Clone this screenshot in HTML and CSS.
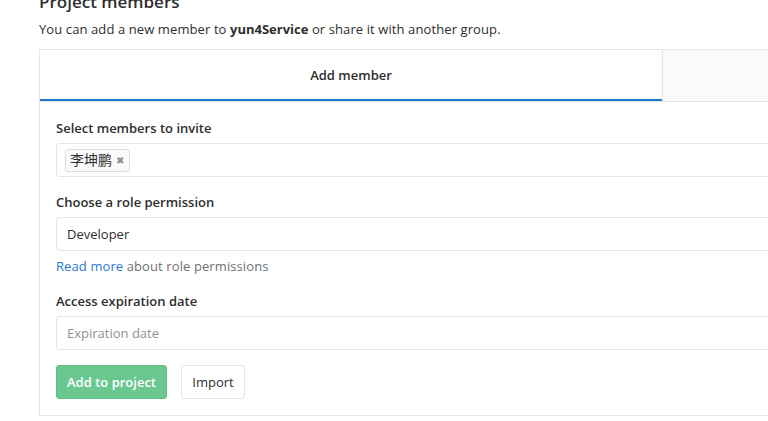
FILE: index.html
```html
<!DOCTYPE html>
<html>
<head>
<meta charset="utf-8">
<link rel="stylesheet" href="styles.css">
</head>
<body>
<div class="page">
  <h3 class="title">Project members</h3>
  <p class="lead">You can add a new member to <strong>yun4Service</strong> or share it with another group.</p>
  <div class="card">
    <div class="tabs">
      <div class="tab active">Add member</div>
      <div class="tab other"></div>
    </div>
    <form class="form">
      <div class="group">
        <label class="label">Select members to invite</label>
        <div class="input tokens">
          <span class="token">李坤鹏<span class="x">✖</span></span>
        </div>
      </div>
      <div class="group">
        <label class="label">Choose a role permission</label>
        <div class="input">Developer</div>
        <div class="help"><a class="link">Read more</a> about role permissions</div>
      </div>
      <div class="group">
        <label class="label">Access expiration date</label>
        <div class="input placeholder">Expiration date</div>
      </div>
      <div class="actions">
        <span class="btn btn-success">Add to project</span>
        <span class="btn btn-default">Import</span>
      </div>
    </form>
  </div>
</div>
</body>
</html>
```

FILE: styles.css
```css
html, body {
  margin: 0;
  padding: 0;
  overflow: hidden;
  background: #fff;
}
body {
  font-family: "Open Sans", "Noto Sans CJK SC", sans-serif;
  font-size: 13px;
  line-height: 20px;
  color: #2e2e2e;
}
.page {
  padding-left: 39px;
  width: 1300px;
}
.title {
  margin: -10px 0 0;
  font-size: 17px;
  line-height: 24px;
  font-weight: 600;
  color: #2e2e2e;
}
.lead {
  margin: 5px 0 10px;
  letter-spacing: 0.1px;
}
.lead strong {
  font-weight: 700;
  letter-spacing: 0;
}
.card {
  width: 1245px;
  border: 1px solid #e5e5e5;
}
.tabs {
  display: flex;
  border-bottom: 1px solid #e5e5e5;
  height: 51px;
}
.tab {
  flex: 0 0 622px;
  display: flex;
  align-items: center;
  justify-content: center;
  font-weight: 600;
  box-sizing: border-box;
}
.tab.active {
  border-bottom: 2px solid #1f78d1;
  padding-top: 1px;
}
.tab.other {
  flex: 1 1 auto;
  background: #fafafa;
  border-left: 1px solid #e5e5e5;
}
.form {
  padding: 16px 16px 16px;
  margin: 0;
}
.group {
  margin-bottom: 15px;
}
.label {
  display: block;
  font-weight: 600;
  margin-bottom: 5px;
}
.input {
  height: 34px;
  box-sizing: border-box;
  border: 1px solid #e5e5e5;
  border-radius: 3px;
  padding: 6px 10px;
  width: 1213px;
}
.tokens {
  padding: 5px 8px;
  display: flex;
  align-items: center;
}
.token {
  display: inline-flex;
  align-items: center;
  height: 23px;
  box-sizing: border-box;
  background: #fafafa;
  border: 1px solid #dcdcdc;
  border-radius: 3px;
  padding: 0 5px 0 4px;
  font-size: 14px;
}
.x {
  font-size: 10px;
  color: #8f8f8f;
  margin-left: 4px;
  line-height: 1;
}
.placeholder {
  color: #919191;
}
.help {
  margin-top: 5px;
  color: #707070;
  letter-spacing: 0.1px;
}
.link {
  color: #1f78d1;
}
.actions {
  display: flex;
  gap: 14px;
}
.btn {
  display: inline-flex;
  align-items: center;
  height: 34px;
  box-sizing: border-box;
  border-radius: 3px;
  padding: 0 12px;
  border: 1px solid #e5e5e5;
}
.btn-success {
  background: #6bc790;
  border-color: #60bf87;
  color: #fff;
  font-weight: 600;
  width: 111px;
  justify-content: center;
  padding: 0;
}
.btn-default {
  background: #fff;
  color: #2e2e2e;
  width: 64px;
  justify-content: center;
  padding: 0;
}
```
